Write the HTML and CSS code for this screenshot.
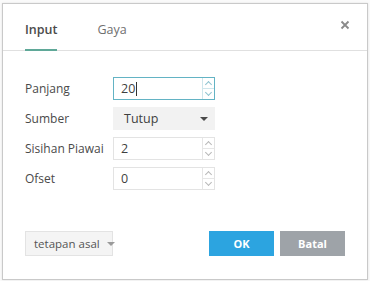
FILE: index.html
```html
<!DOCTYPE html>
<html>
<head>
<meta charset="utf-8">
<link rel="stylesheet" href="styles.css">
</head>
<body>
<div class="backdrop"></div>
<div class="dialog">
  <div class="header">
    <div class="tab active">Input</div>
    <div class="tab">Gaya</div>
    <div class="close">
      <svg width="10" height="10" viewBox="0 0 10 10"><path d="M1.5 1.5 L8.5 8.5 M8.5 1.5 L1.5 8.5" stroke="#8a8a8a" stroke-width="1.8" fill="none"/></svg>
    </div>
  </div>
  <div class="body">
    <div class="row">
      <div class="label">Panjang</div>
      <div class="field focus">
        <span class="val">20<span class="caret"></span></span>
        <span class="spin"><span class="up"></span><span class="down"></span></span>
      </div>
    </div>
    <div class="row">
      <div class="label">Sumber</div>
      <div class="field select">
        <span class="val">Tutup</span>
        <span class="tri"></span>
      </div>
    </div>
    <div class="row">
      <div class="label">Sisihan Piawai</div>
      <div class="field">
        <span class="val">2</span>
        <span class="spin"><span class="up"></span><span class="down"></span></span>
      </div>
    </div>
    <div class="row">
      <div class="label">Ofset</div>
      <div class="field">
        <span class="val">0</span>
        <span class="spin"><span class="up"></span><span class="down"></span></span>
      </div>
    </div>
  </div>
  <div class="footer">
    <div class="defaults">tetapan asal <span class="tri small"></span></div>
    <div class="spacer"></div>
    <div class="btn ok">OK</div>
    <div class="btn cancel">Batal</div>
  </div>
</div>
</body>
</html>
```
FILE: styles.css
```css
html, body {
  margin: 0;
  padding: 0;
  width: 370px;
  height: 281px;
  overflow: hidden;
  background: #ffffff;
  font-family: "Open Sans", "Noto Sans", sans-serif;
  color: #4a4a4a;
}
.backdrop {
  position: absolute;
  left: 0; top: 0; width: 370px; height: 281px;
  background: #fafafa;
}
.dialog {
  position: absolute;
  left: 2px;
  top: 3px;
  width: 364px;
  height: 275px;
  background: #fff;
  border: 1px solid #c9c9c9;
  box-shadow: 0 0 2px rgba(0,0,0,0.1);
  display: flex;
  flex-direction: column;
}
.header {
  display: flex;
  align-items: flex-end;
  height: 46px;
  border-bottom: 1px solid #e0e0e0;
  padding-left: 22px;
  position: relative;
}
.tab {
  font-size: 12.5px;
  color: #6f6f6f;
  padding-bottom: 11px;
  margin-right: 40px;
  border-bottom: 2px solid transparent;
  margin-bottom: -1px;
  line-height: 17px;
}
.tab.active {
  color: #4a4a4a;
  font-weight: 600;
  border-bottom-color: #5fa898;
}
.close {
  position: absolute;
  right: 17px;
  top: 16px;
  width: 10px;
  height: 10px;
  display: flex;
}
.body {
  padding: 26px 0 0 22px;
  display: flex;
  flex-direction: column;
  gap: 7px;
}
.row {
  display: flex;
  align-items: center;
  height: 23px;
}
.label {
  width: 88px;
  font-size: 12px;
  color: #4a4a4a;
  white-space: nowrap;
}
.field {
  width: 100px;
  height: 21px;
  border: 1px solid #e3e3e3;
  display: flex;
  align-items: center;
  position: relative;
  background: #fff;
}
.field.focus {
  border-color: #63b3c4;
}
.field.select {
  background: #f2f2f2;
  border-color: #f2f2f2;
}
.val {
  font-size: 12.5px;
  padding-left: 7px;
  color: #3f3f3f;
  flex: 1;
  display: flex;
  align-items: center;
}
.select .val { padding-left: 10px; }
.caret {
  display: inline-block;
  width: 1px;
  height: 14px;
  background: #333;
  margin-left: 1px;
}
.spin {
  width: 11px;
  height: 21px;
  border-left: 1px solid #e6e6e6;
  display: flex;
  flex-direction: column;
}
.spin .up, .spin .down {
  flex: 1;
  position: relative;
}
.spin .up { border-bottom: 1px solid #e6e6e6; }
.spin .up::after, .spin .down::after {
  content: "";
  position: absolute;
  left: 3px;
  width: 4px;
  height: 4px;
  border-left: 1px solid #b8b8b8;
  border-top: 1px solid #b8b8b8;
}
.spin .up::after { top: 4px; transform: rotate(45deg); }
.spin .down::after { top: 1px; transform: rotate(225deg); }
.focus .spin .up::after, .focus .spin .down::after { border-color: #8fc3d0; }
.focus .spin { border-left-color: #cfe6ec; }
.focus .spin .up { border-bottom-color: #cfe6ec; }
.tri {
  width: 0;
  height: 0;
  border-left: 4px solid transparent;
  border-right: 4px solid transparent;
  border-top: 4px solid #4a4a4a;
  margin-right: 6px;
}
.tri.small {
  border-top-color: #9a9a9a;
  margin: 0 0 0 7px;
}
.footer {
  margin-top: auto;
  display: flex;
  align-items: center;
  padding: 0 22px 23px 22px;
}
.defaults {
  width: 88px;
  height: 25px;
  border: 1px solid #e3e3e3;
  background: #f4f4f4;
  font-size: 11.5px;
  color: #555;
  display: flex;
  align-items: center;
  padding-left: 8px;
  box-sizing: border-box;
  white-space: nowrap;
}
.spacer { flex: 1; }
.btn {
  width: 65px;
  height: 25px;
  display: flex;
  align-items: center;
  justify-content: center;
  color: #fff;
  font-size: 11px;
  font-weight: 700;
}
.ok {
  background: #2ca4e0;
  margin-right: 6px;
}
.cancel {
  background: #9ea3a8;
}
```
